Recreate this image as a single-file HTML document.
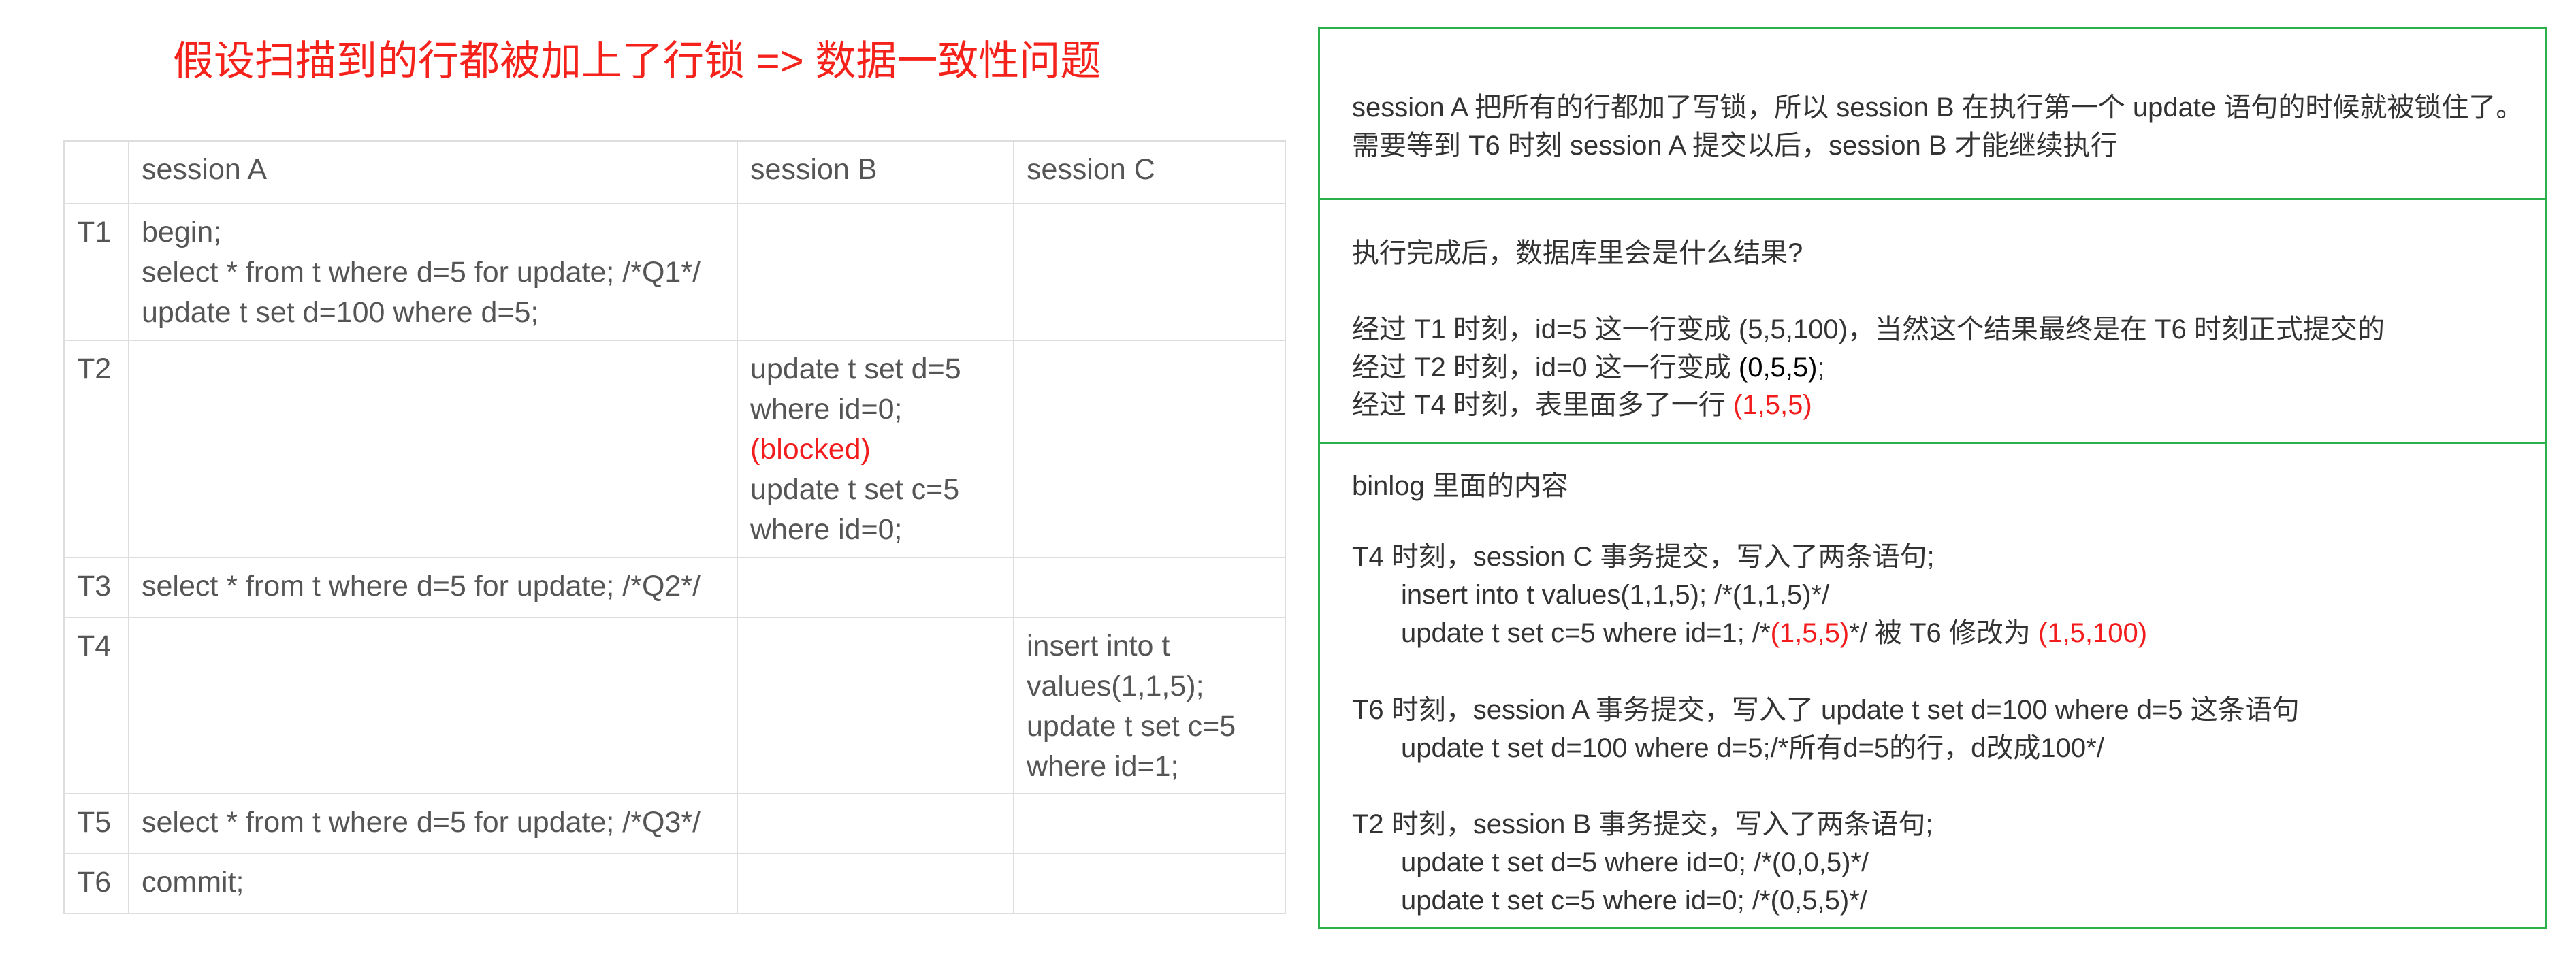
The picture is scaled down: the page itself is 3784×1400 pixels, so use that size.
<!DOCTYPE html>
<html><head><meta charset="utf-8"><style>
html,body{margin:0;padding:0;background:#fff;width:3784px;height:1400px;overflow:hidden;position:relative}
body{font-family:"Liberation Sans","Noto Sans CJK SC",sans-serif}
.title{position:absolute;left:254px;top:54px;font-size:60px;line-height:72px;color:#f5221b;white-space:nowrap}
table{position:absolute;left:93px;top:206px;border-collapse:collapse;font-size:43px;color:#555;}
td{border:2px solid #ddd;vertical-align:top;padding:12px 18px 0 18px;line-height:59px;box-sizing:border-box}
td.t{padding-left:18px}
.r{color:#f21c1c}
.panel{position:absolute;left:1936px;top:39px;width:1806px;height:1326px;border:3px solid #2bb04a;box-sizing:border-box}
.hl{position:absolute;left:1936px;width:1806px;height:3px;background:#2bb04a}
.ln{position:absolute;left:1986px;font-size:40px;line-height:56px;color:#333;white-space:nowrap}
.in{left:2058px}
</style></head><body>
<div class="title">假设扫描到的行都被加上了行锁 =&gt; 数据一致性问题</div>
<table>
<tr style="height:92px"><td style="width:95px"></td><td style="width:894px">session A</td><td style="width:406px">session B</td><td style="width:399px">session C</td></tr>
<tr style="height:201px"><td class="t">T1</td><td>begin;<br>select * from t where d=5 for update; /*Q1*/<br>update t set d=100 where d=5;</td><td></td><td></td></tr>
<tr style="height:319px"><td class="t">T2</td><td></td><td>update t set d=5<br>where id=0;<br><span class="r">(blocked)</span><br>update t set c=5<br>where id=0;</td><td></td></tr>
<tr style="height:88px"><td class="t">T3</td><td>select * from t where d=5 for update; /*Q2*/</td><td></td><td></td></tr>
<tr style="height:259px"><td class="t">T4</td><td></td><td></td><td>insert into t<br>values(1,1,5);<br>update t set c=5<br>where id=1;</td></tr>
<tr style="height:88px"><td class="t">T5</td><td>select * from t where d=5 for update; /*Q3*/</td><td></td><td></td></tr>
<tr style="height:88px"><td class="t">T6</td><td>commit;</td><td></td><td></td></tr>
</table>
<div class="panel"></div>
<div class="hl" style="top:291px"></div>
<div class="hl" style="top:649px"></div>
<div class="ln" style="top:130px">session A 把所有的行都加了写锁，所以 session B 在执行第一个 update 语句的时候就被锁住了。</div>
<div class="ln" style="top:186px">需要等到 T6 时刻 session A 提交以后，session B 才能继续执行</div>
<div class="ln" style="top:344px">执行完成后，数据库里会是什么结果?</div>
<div class="ln" style="top:456px">经过 T1 时刻，id=5 这一行变成 (5,5,100)，当然这个结果最终是在 T6 时刻正式提交的</div>
<div class="ln" style="top:512px">经过 T2 时刻，id=0 这一行变成 <span style="color:#000">(0,5,5)</span>;</div>
<div class="ln" style="top:567px">经过 T4 时刻，表里面多了一行 <span class="r">(1,5,5)</span></div>
<div class="ln" style="top:686px">binlog 里面的内容</div>
<div class="ln" style="top:790px">T4 时刻，session C 事务提交，写入了两条语句;</div>
<div class="ln in" style="top:846px">insert into t values(1,1,5); /*(1,1,5)*/</div>
<div class="ln in" style="top:902px">update t set c=5 where id=1; /*<span class="r">(1,5,5)</span>*/ 被 T6 修改为 <span class="r">(1,5,100)</span></div>
<div class="ln" style="top:1015px">T6 时刻，session A 事务提交，写入了 update t set d=100 where d=5 这条语句</div>
<div class="ln in" style="top:1071px">update t set d=100 where d=5;/*所有d=5的行，d改成100*/</div>
<div class="ln" style="top:1183px">T2 时刻，session B 事务提交，写入了两条语句;</div>
<div class="ln in" style="top:1239px">update t set d=5 where id=0; /*(0,0,5)*/</div>
<div class="ln in" style="top:1295px">update t set c=5 where id=0; /*(0,5,5)*/</div>
</body></html>
